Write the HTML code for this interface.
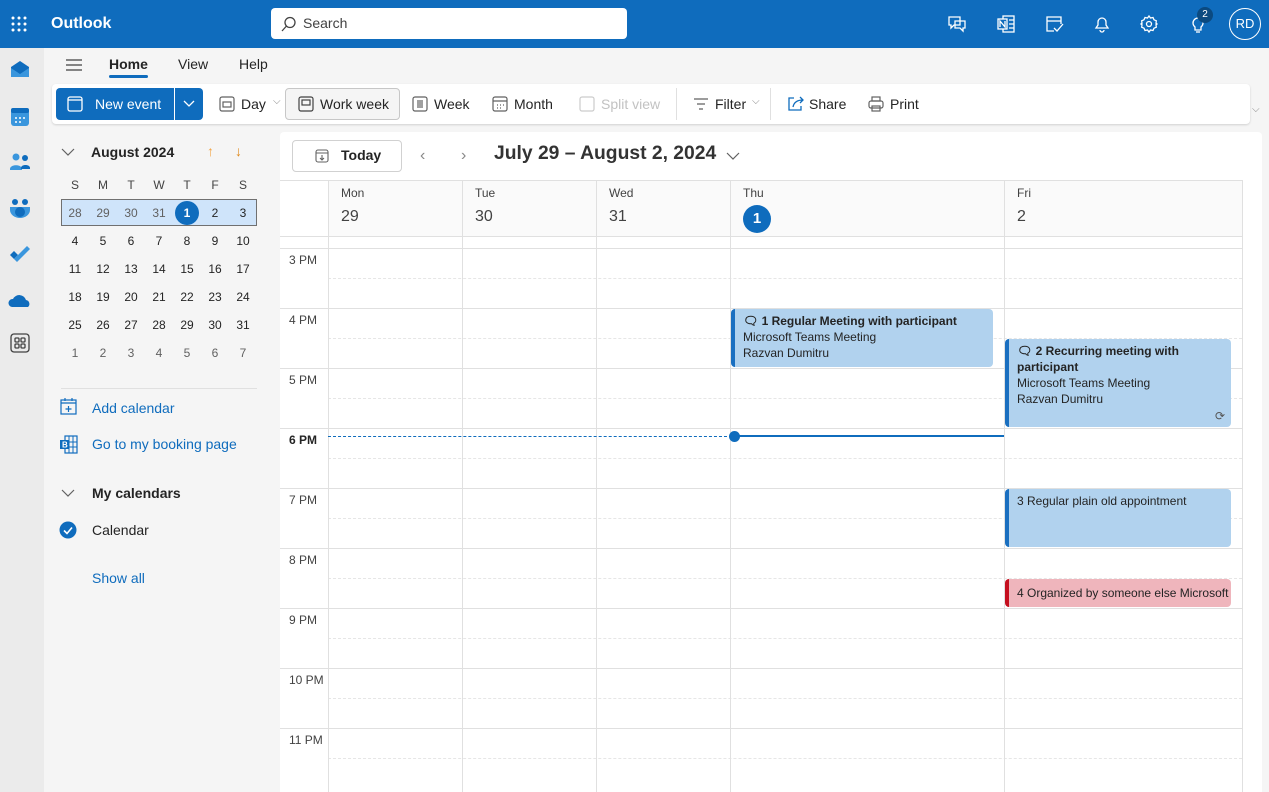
<!DOCTYPE html>
<html><head><meta charset="utf-8"><style>
*{box-sizing:border-box;margin:0;padding:0}
body{width:1269px;height:792px;overflow:hidden;background:#f5f5f5;font-family:"Segoe UI","Liberation Sans",sans-serif;color:#242424;position:relative;font-size:14px}
.a{position:absolute}
.top{left:0;top:0;width:1269px;height:48px;background:#0f6cbd}
.rail{left:0;top:48px;width:44px;height:744px;background:#ebebeb}
.mc{font-size:12px;text-align:center;width:28px;position:absolute}
.hl{position:absolute;left:280px;width:962px;border-top:1px solid #e0e0e0}
.dl{position:absolute;left:328px;width:914px;border-top:1px dashed #e6e6e6}
.vl{position:absolute;top:180px;height:612px;border-left:1px solid #e0e0e0}
.tl{position:absolute;left:289px;font-size:12px;color:#424242}
.ev{position:absolute;background:#b1d2ee;border-left:4px solid #1a6fc0;border-radius:4px;font-size:12px;color:#242424;padding:4px 8px;line-height:16px;overflow:hidden;white-space:nowrap}
.ev b{font-weight:600}
.tb{position:absolute;top:96px;font-size:14px;color:#242424}
</style></head><body>
<div class="a top"></div>
<svg class="a" style="left:11px;top:16px" width="16" height="16"><g fill="#fff"><circle cx="2" cy="2" r="1.5"/><circle cx="8" cy="2" r="1.5"/><circle cx="14" cy="2" r="1.5"/><circle cx="2" cy="8" r="1.5"/><circle cx="8" cy="8" r="1.5"/><circle cx="14" cy="8" r="1.5"/><circle cx="2" cy="14" r="1.5"/><circle cx="8" cy="14" r="1.5"/><circle cx="14" cy="14" r="1.5"/></g></svg>
<div class="a" style="left:51px;top:15px;color:#fff;font-weight:600;font-size:16px">Outlook</div>
<div class="a" style="left:271px;top:8px;width:356px;height:31px;background:#fff;border-radius:4px"></div>
<svg class="a" style="left:281px;top:16px" width="16" height="16" fill="none" stroke="#424242" stroke-width="1.3"><circle cx="9" cy="6.5" r="5"/><path d="M5.5 10L1 15"/></svg>
<div class="a" style="left:303px;top:15px;font-size:14px;color:#424242">Search</div>
<svg class="a" style="left:947px;top:14px" width="20" height="20" fill="none" stroke="#fff" stroke-width="1.3"><path d="M2 3h11v8H7l-3 3v-3H2z"/><path d="M8 7h10v7h-2v3l-3-3H8z"/></svg>
<svg class="a" style="left:996px;top:14px" width="20" height="20" fill="none" stroke="#fff" stroke-width="1.3"><rect x="7" y="2" width="11" height="16"/><rect x="2" y="5" width="9" height="10" fill="#0f6cbd"/><path d="M4 13V7l5 6V7"/><path d="M13 6h5M13 10h5M13 14h5"/></svg>
<svg class="a" style="left:1044px;top:14px" width="20" height="20" fill="none" stroke="#fff" stroke-width="1.3"><path d="M10 17H3V3h14v7"/><path d="M3 7h14"/><path d="M10 14l3 3 6-7"/></svg>
<svg class="a" style="left:1092px;top:14px" width="20" height="20" fill="none" stroke="#fff" stroke-width="1.3"><path d="M4 14h12l-2-3V8a4 4 0 0 0-8 0v3z"/><path d="M8 16a2 2 0 0 0 4 0"/></svg>
<svg class="a" style="left:1139px;top:14px" width="20" height="20" fill="none" stroke="#fff" stroke-width="1.3"><circle cx="10" cy="10" r="2.5"/><path d="M10 2l1.5 2 2.5-.5 1 2.3 2.3 1L17 9.3 18 10l-1 .7.3 2.5-2.3 1-1 2.3-2.5-.5L10 18l-1.5-2-2.5.5-1-2.3-2.3-1L3 10.7 2 10l1-.7-.3-2.5 2.3-1 1-2.3 2.5.5z"/></svg>
<svg class="a" style="left:1188px;top:14px" width="20" height="20" fill="none" stroke="#fff" stroke-width="1.3"><path d="M7 13a5 5 0 1 1 6 0v3H7z"/><path d="M8 18h4"/></svg>
<div class="a" style="left:1197px;top:7px;width:16px;height:16px;border-radius:8px;background:#0b4a80;color:#fff;font-size:10px;text-align:center;line-height:16px">2</div>
<div class="a" style="left:1229px;top:8px;width:32px;height:32px;border-radius:16px;border:1.5px solid #fff;color:#fff;font-size:13px;text-align:center;line-height:29px">RD</div>

<div class="a rail"></div>
<svg class="a" style="left:9px;top:59px" width="22" height="22"><path d="M2 8l9-6 9 6v10H2z" fill="#0f6cbd"/><path d="M2 9l9 6 9-6v9H2z" fill="#3a96dd"/></svg>
<svg class="a" style="left:9px;top:106px" width="22" height="22"><rect x="2" y="2" width="18" height="18" rx="3" fill="#3a96dd"/><rect x="2" y="2" width="18" height="5" rx="2" fill="#0f6cbd"/><g fill="#fff"><circle cx="7" cy="12" r="1"/><circle cx="11" cy="12" r="1"/><circle cx="15" cy="12" r="1"/><circle cx="7" cy="16" r="1"/><circle cx="11" cy="16" r="1"/></g></svg>
<svg class="a" style="left:9px;top:152px" width="22" height="20"><circle cx="7" cy="5" r="3.5" fill="#3a96dd"/><circle cx="16" cy="6" r="3" fill="#0f6cbd"/><path d="M1 17c0-5 12-5 12 0v1H1z" fill="#3a96dd"/><path d="M12 16c0-4 9-4 9 0v1h-9z" fill="#0f6cbd"/></svg>
<svg class="a" style="left:9px;top:197px" width="22" height="22"><circle cx="6" cy="5" r="3" fill="#0f6cbd"/><circle cx="16" cy="5" r="3" fill="#0f6cbd"/><path d="M1 10h20v3a10 8 0 0 1-20 0z" fill="#3a96dd"/><circle cx="11" cy="15" r="5" fill="#0f6cbd"/></svg>
<svg class="a" style="left:9px;top:244px" width="22" height="20"><path d="M1 11l4-4 4 4-4 4z" fill="#0f6cbd"/><path d="M5 15L18 2l3 3L8 18z" fill="#3a96dd"/></svg>
<svg class="a" style="left:8px;top:292px" width="24" height="16"><path d="M4 15a4 4 0 0 1 1-8 7 7 0 0 1 13 1 4 4 0 0 1 2 7z" fill="#0f6cbd"/></svg>
<svg class="a" style="left:10px;top:333px" width="20" height="20" fill="none" stroke="#424242" stroke-width="1.3"><rect x="1" y="1" width="18" height="18" rx="3"/><rect x="5" y="5" width="4" height="4" rx="1"/><rect x="11" y="5" width="4" height="4" rx="1"/><rect x="5" y="11" width="4" height="4" rx="1"/><rect x="11" y="11" width="4" height="4" rx="1"/></svg>

<svg class="a" style="left:65px;top:57px" width="18" height="16" stroke="#424242" stroke-width="1.3"><path d="M1 3h16M1 8h16M1 13h16"/></svg>
<div class="a" style="left:109px;top:56px;font-weight:600">Home</div>
<div class="a" style="left:109px;top:75px;width:39px;height:3px;background:#0f6cbd;border-radius:2px"></div>
<div class="a" style="left:178px;top:56px">View</div>
<div class="a" style="left:239px;top:56px">Help</div>

<div class="a" style="left:52px;top:84px;width:1198px;height:40px;background:#fff;border-radius:4px;box-shadow:0 1px 2px rgba(0,0,0,.15)"></div>
<div class="a" style="left:56px;top:88px;width:147px;height:32px;background:#0f6cbd;border-radius:4px"></div>
<div class="a" style="left:174px;top:88px;width:1px;height:32px;background:#fff"></div>
<svg class="a" style="left:67px;top:96px" width="16" height="16" fill="none" stroke="#fff" stroke-width="1.3"><rect x="1" y="1" width="14" height="14" rx="2"/><path d="M1 4h14"/></svg>
<div class="a" style="left:95px;top:96px;color:#fff">New event</div>
<svg class="a" style="left:183px;top:100px" width="12" height="8" fill="none" stroke="#fff" stroke-width="1.3"><path d="M1 1l5 5 5-5"/></svg>
<svg class="a" style="left:219px;top:96px" width="16" height="16" fill="none" stroke="#616161" stroke-width="1.2"><rect x="1" y="1" width="14" height="14" rx="2"/><rect x="4" y="6" width="8" height="5"/></svg>
<div class="tb" style="left:241px">Day</div>
<div class="a" style="left:273px;top:96px;font-size:10px;color:#888">⌵</div>
<div class="a" style="left:285px;top:88px;width:115px;height:32px;border:1px solid #c7c7c7;background:#f5f5f5;border-radius:4px"></div>
<svg class="a" style="left:298px;top:96px" width="16" height="16" fill="none" stroke="#424242" stroke-width="1.2"><rect x="1" y="1" width="14" height="14" rx="2"/><rect x="4" y="4" width="8" height="5"/></svg>
<div class="tb" style="left:320px">Work week</div>
<svg class="a" style="left:412px;top:96px" width="16" height="16" fill="none" stroke="#616161" stroke-width="1.2"><rect x="1" y="1" width="14" height="14" rx="2"/><path d="M6 4v8M8 4v8M10 4v8"/></svg>
<div class="tb" style="left:434px">Week</div>
<svg class="a" style="left:492px;top:96px" width="16" height="16" fill="none" stroke="#616161" stroke-width="1.2"><rect x="1" y="1" width="14" height="14" rx="2"/><path d="M1 5h14M5 9h1M8 9h1M11 9h1M5 12h1M8 12h1"/></svg>
<div class="tb" style="left:514px">Month</div>
<svg class="a" style="left:579px;top:96px" width="16" height="16" fill="none" stroke="#ccc" stroke-width="1.2"><rect x="1" y="1" width="14" height="14" rx="2"/></svg>
<div class="tb" style="left:601px;color:#c2c2c2">Split view</div>
<div class="a" style="left:676px;top:88px;width:1px;height:32px;background:#e0e0e0"></div>
<svg class="a" style="left:693px;top:97px" width="16" height="14" stroke="#616161" stroke-width="1.2"><path d="M1 2h14M4 7h8M6 12h4"/></svg>
<div class="tb" style="left:715px">Filter</div>
<div class="a" style="left:752px;top:96px;font-size:10px;color:#888">⌵</div>
<div class="a" style="left:770px;top:88px;width:1px;height:32px;background:#e0e0e0"></div>
<svg class="a" style="left:787px;top:96px" width="18" height="16" fill="none" stroke="#0f6cbd" stroke-width="1.3"><path d="M7 2H2v12h12V10"/><path d="M6 11c1-5 5-7 10-7M13 1l3 3-3 3"/></svg>
<div class="tb" style="left:809px">Share</div>
<svg class="a" style="left:868px;top:96px" width="16" height="16" fill="none" stroke="#616161" stroke-width="1.2"><rect x="4" y="1" width="8" height="4"/><rect x="1" y="5" width="14" height="7" rx="2"/><rect x="4" y="10" width="8" height="5"/></svg>
<div class="tb" style="left:890px">Print</div>
<div class="a" style="left:1252px;top:104px;font-size:10px;color:#888">⌵</div>

<svg class="a" style="left:61px;top:148px" width="14" height="9" fill="none" stroke="#616161" stroke-width="1.2"><path d="M1 1l6 6 6-6"/></svg>
<div class="a" style="left:91px;top:144px;font-weight:600;font-size:14px">August 2024</div>
<div class="a" style="left:207px;top:143px;color:#f2a444;font-size:14px">↑</div>
<div class="a" style="left:235px;top:143px;color:#e08a1c;font-size:14px">↓</div>
<div class="a" style="left:61px;top:199px;width:196px;height:27px;background:#cfe4fa;border:1px solid #707070"></div>
<div class="a" style="left:175px;top:201px;width:24px;height:24px;border-radius:12px;background:#0f6cbd"></div>
<div id="mc"></div>

<div class="a" style="left:61px;top:388px;width:196px;border-top:1px solid #e0e0e0"></div>
<svg class="a" style="left:60px;top:398px" width="17" height="17" fill="none" stroke="#0f6cbd" stroke-width="1.2"><rect x="1" y="2" width="15" height="14"/><path d="M1 5h15M8.5 8v6M5.5 11h6M5 0v3M12 0v3"/></svg>
<div class="a" style="left:92px;top:400px;color:#0f6cbd">Add calendar</div>
<svg class="a" style="left:59px;top:435px" width="19" height="19"><rect x="6" y="1" width="12" height="17" fill="none" stroke="#0f6cbd" stroke-width="1.2"/><path d="M10 1v17M14 1v17M6 7h12M6 12h12" stroke="#0f6cbd" stroke-width="1"/><rect x="1" y="5" width="9" height="9" fill="#0f6cbd"/><text x="3" y="12.5" font-size="8" fill="#fff" font-family="Liberation Sans" font-weight="bold">B</text></svg>
<div class="a" style="left:92px;top:436px;color:#0f6cbd">Go to my booking page</div>
<svg class="a" style="left:61px;top:489px" width="14" height="9" fill="none" stroke="#616161" stroke-width="1.2"><path d="M1 1l6 6 6-6"/></svg>
<div class="a" style="left:92px;top:485px;font-weight:600">My calendars</div>
<svg class="a" style="left:59px;top:521px" width="18" height="18"><circle cx="9" cy="9" r="8.5" fill="#0f6cbd"/><path d="M5 9.5l3 3 5-6" stroke="#fff" stroke-width="1.6" fill="none"/></svg>
<div class="a" style="left:92px;top:522px">Calendar</div>
<div class="a" style="left:92px;top:570px;color:#0f6cbd">Show all</div>

<div class="a" style="left:280px;top:132px;width:982px;height:660px;background:#fff;border-radius:4px 4px 0 0"></div>
<div class="a" style="left:292px;top:140px;width:110px;height:32px;border:1px solid #d1d1d1;border-radius:4px"></div>
<svg class="a" style="left:315px;top:149px" width="14" height="14" fill="none" stroke="#616161" stroke-width="1.1"><rect x="1" y="1" width="12" height="12" rx="2"/><path d="M1 4h12M7 6v5M5 9l2 2 2-2"/></svg>
<div class="a" style="left:341px;top:147px;font-weight:600">Today</div>
<div class="a" style="left:420px;top:147px;color:#888;font-size:16px">‹</div>
<div class="a" style="left:461px;top:147px;color:#888;font-size:16px">›</div>
<div class="a" style="left:494px;top:143px;font-size:19.3px;font-weight:600;color:#333">July 29 – August 2, 2024</div>
<svg class="a" style="left:726px;top:152px" width="14" height="9" fill="none" stroke="#616161" stroke-width="1.2"><path d="M1 1l6 6 6-6"/></svg>

<div class="a" style="left:328px;top:180px;width:676px;height:56px;background:#fafafa"></div>
<div class="a" style="left:1004px;top:180px;width:238px;height:56px;background:#fafafa"></div>
<div class="hl" style="top:180px"></div>
<div class="hl" style="top:236px"></div>
<div class="a" style="left:341px;top:186px;font-size:12px;color:#424242">Mon</div><div class="a" style="left:341px;top:208px;font-size:16px;color:#424242">29</div>
<div class="a" style="left:475px;top:186px;font-size:12px;color:#424242">Tue</div><div class="a" style="left:475px;top:208px;font-size:16px;color:#424242">30</div>
<div class="a" style="left:609px;top:186px;font-size:12px;color:#424242">Wed</div><div class="a" style="left:609px;top:208px;font-size:16px;color:#424242">31</div>
<div class="a" style="left:743px;top:186px;font-size:12px;color:#424242">Thu</div>
<div class="a" style="left:743px;top:205px;width:28px;height:28px;border-radius:14px;background:#0f6cbd;color:#fff;font-weight:700;font-size:15px;text-align:center;line-height:28px">1</div>
<div class="a" style="left:1017px;top:186px;font-size:12px;color:#424242">Fri</div><div class="a" style="left:1017px;top:208px;font-size:16px;color:#424242">2</div>

<div id="grid"></div>
<div class="vl" style="left:328px"></div><div class="vl" style="left:462px"></div><div class="vl" style="left:596px"></div><div class="vl" style="left:730px"></div><div class="vl" style="left:1004px"></div><div class="vl" style="left:1242px"></div>

<div class="a" style="left:328px;top:436px;width:404px;border-top:1px dashed #0f6cbd"></div>
<div class="a" style="left:734px;top:435px;width:270px;height:2px;background:#0f6cbd"></div>
<div class="a" style="left:729px;top:431px;width:11px;height:11px;border-radius:6px;background:#0f6cbd"></div>

<div class="ev" style="left:731px;top:309px;width:262px;height:58px"><b>🗨 1 Regular Meeting with participant</b><br>Microsoft Teams Meeting<br>Razvan Dumitru</div>
<div class="ev" style="left:1005px;top:339px;width:226px;height:88px;white-space:normal"><b>🗨 2 Recurring meeting with participant</b><br>Microsoft Teams Meeting<br>Razvan Dumitru<span class="a" style="right:6px;bottom:3px;color:#555">⟳</span></div>
<div class="ev" style="left:1005px;top:489px;width:226px;height:58px">3 Regular plain old appointment</div>
<div class="ev" style="left:1005px;top:579px;width:226px;height:28px;background:#efb5bc;border-left-color:#c50f1f;padding-top:6px">4 Organized by someone else Microsoft Teams</div>

<script>
var g='',labels=['3 PM','4 PM','5 PM','6 PM','7 PM','8 PM','9 PM','10 PM','11 PM'];
g+='<div class="hl" style="top:248px"></div>';
for(var i=0;i<9;i++){var y=248+i*60;
 if(i>0)g+='<div class="hl" style="top:'+y+'px"></div>';
 g+='<div class="dl" style="top:'+(y+30)+'px"></div>';
 g+='<div class="tl" style="top:'+(y+5)+'px;'+(i==3?'font-weight:700;color:#242424':'')+'">'+labels[i]+'</div>';}
document.getElementById('grid').innerHTML=g;
var m='',hd=['S','M','T','W','T','F','S'];
for(var c=0;c<7;c++)m+='<div class="mc" style="left:'+(61+c*28)+'px;top:178px;color:#424242">'+hd[c]+'</div>';
var d=[[28,29,30,31,1,2,3],[4,5,6,7,8,9,10],[11,12,13,14,15,16,17],[18,19,20,21,22,23,24],[25,26,27,28,29,30,31],[1,2,3,4,5,6,7]];
for(var r=0;r<6;r++)for(var c=0;c<7;c++){var col=(r==0&&c<4)||r==5?'#616161':'#242424';if(r==0&&c==4)col='#fff;font-weight:700';
 m+='<div class="mc" style="left:'+(61+c*28)+'px;top:'+(206+r*28)+'px;color:'+col+'">'+d[r][c]+'</div>';}
document.getElementById('mc').innerHTML=m;
</script>
</body></html>
